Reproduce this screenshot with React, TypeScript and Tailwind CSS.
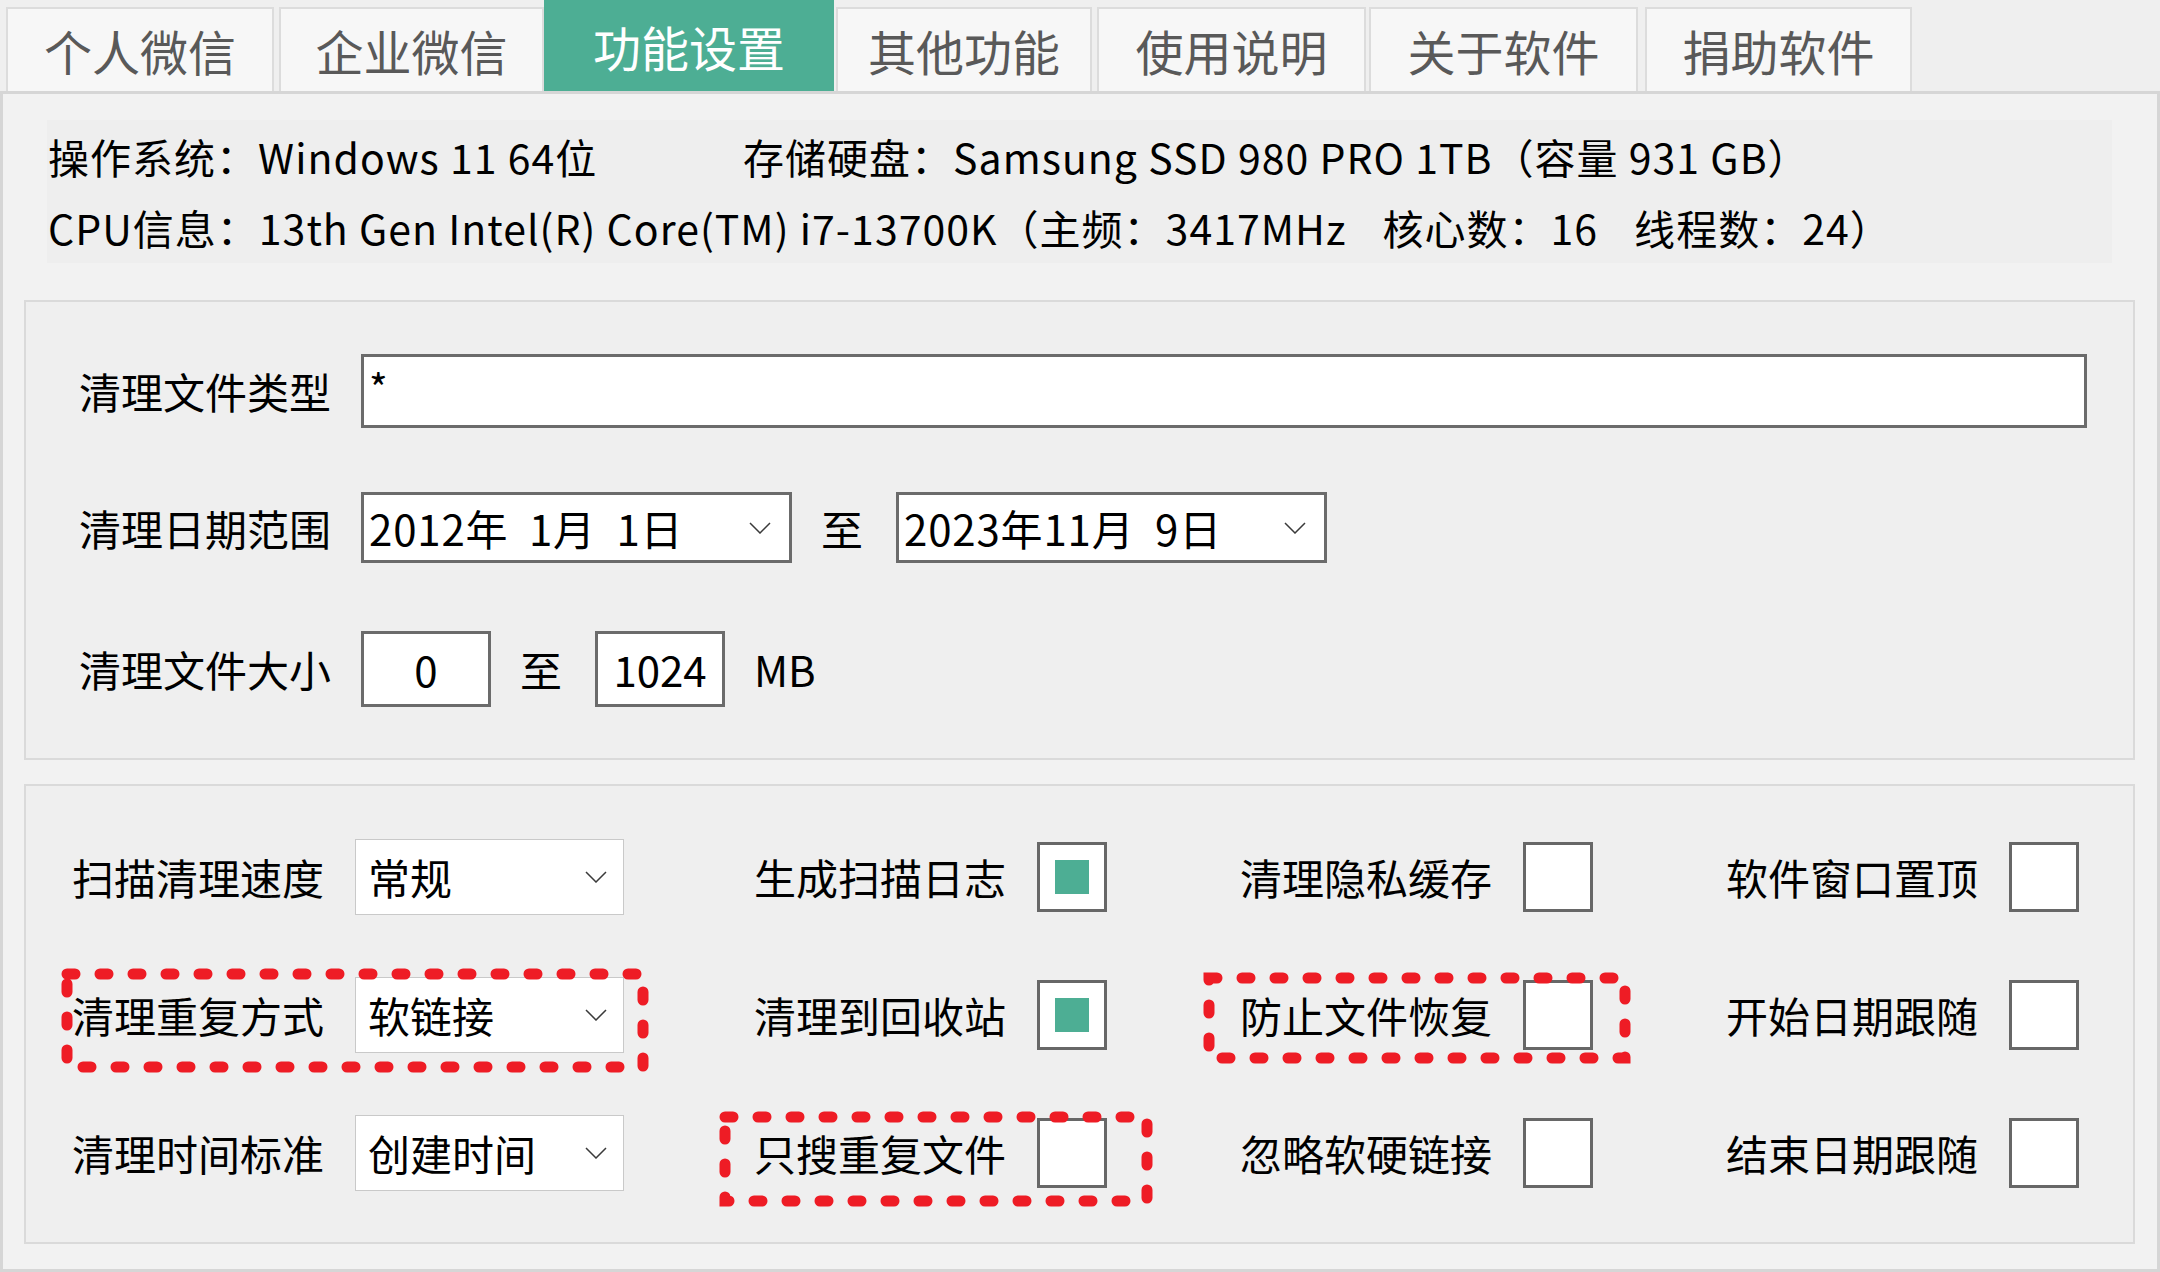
import React from "react";

/* ------------------------------------------------------------------ */
/*  Data                                                              */
/* ------------------------------------------------------------------ */

const TABS = [
  { label: "个人微信", className: "ml-[6px] w-[268px]" },
  { label: "企业微信", className: "ml-[5px] w-[265px]" },
  { label: "功能设置", className: "w-[290px]", active: true },
  { label: "其他功能", className: "ml-[2px] w-[256px]" },
  { label: "使用说明", className: "ml-[5px] w-[269px]" },
  { label: "关于软件", className: "ml-[3px] w-[269px]" },
  { label: "捐助软件", className: "ml-[7px] w-[267px]" },
];

type Cell =
  | { kind: "combo"; label: string; value: string }
  | { kind: "check"; label: string; checked: boolean };

const GRID: Cell[][] = [
  [
    { kind: "combo", label: "扫描清理速度", value: "常规" },
    { kind: "check", label: "生成扫描日志", checked: true },
    { kind: "check", label: "清理隐私缓存", checked: false },
    { kind: "check", label: "软件窗口置顶", checked: false },
  ],
  [
    { kind: "combo", label: "清理重复方式", value: "软链接" },
    { kind: "check", label: "清理到回收站", checked: true },
    { kind: "check", label: "防止文件恢复", checked: false },
    { kind: "check", label: "开始日期跟随", checked: false },
  ],
  [
    { kind: "combo", label: "清理时间标准", value: "创建时间" },
    { kind: "check", label: "只搜重复文件", checked: false },
    { kind: "check", label: "忽略软硬链接", checked: false },
    { kind: "check", label: "结束日期跟随", checked: false },
  ],
];

/* ------------------------------------------------------------------ */
/*  Small controls                                                    */
/* ------------------------------------------------------------------ */

function Chevron() {
  return (
    <svg width="22" height="12" viewBox="0 0 22 12" className="shrink-0">
      <path d="M1 1 L11 11 L21 1" fill="none" stroke="#3a3a3a" strokeWidth="1.5" />
    </svg>
  );
}

function Checkbox({ checked }: { checked: boolean }) {
  return (
    <div className="flex h-[70px] w-[70px] items-center justify-center border-[3px] border-[#676767] bg-white">
      {checked && <div className="h-[34px] w-[34px] bg-[#4dae94]" />}
    </div>
  );
}

function Combo({ value }: { value: string }) {
  return (
    <div className="flex h-[76px] w-[269px] items-center justify-between border border-[#c9c9c9] bg-white pl-[12px] pr-[16px]">
      <span className="text-[42px] leading-none text-black">{value}</span>
      <Chevron />
    </div>
  );
}

function DateBox({ value }: { value: string }) {
  return (
    <div className="flex h-[71px] w-[431px] items-center justify-between border-[3px] border-[#6b6b6b] bg-white pl-[5px] pr-[18px]">
      <span className="whitespace-pre text-[42px] leading-none tracking-[0.02em] text-black">{value}</span>
      <Chevron />
    </div>
  );
}

function SizeBox({ value }: { value: string }) {
  return (
    <div className="flex h-[76px] w-[130px] items-center justify-center border-[3px] border-[#6b6b6b] bg-white text-[42px] leading-none text-black">
      {value}
    </div>
  );
}

/* red dotted annotation drawn over the screenshot */
function Mark({ className }: { className: string }) {
  return (
    <div className={"pointer-events-none absolute " + className}>
      <svg className="h-full w-full overflow-visible">
        <rect
          x="0"
          y="0"
          width="100%"
          height="100%"
          fill="none"
          stroke="#ee1c25"
          strokeWidth="11"
          strokeLinecap="round"
          strokeDasharray="8 25"
        />
      </svg>
    </div>
  );
}

/* ------------------------------------------------------------------ */
/*  Page                                                              */
/* ------------------------------------------------------------------ */

export default function App() {
  return (
    <div className="relative h-[1272px] w-[2160px] overflow-hidden bg-[#efefef] font-['Noto_Sans_CJK_SC','Noto_Sans',sans-serif] text-black">
      {/* Tab strip */}
      <div className="flex h-[91px] items-end">
        {TABS.map((t) =>
          t.active ? (
            <div
              key={t.label}
              className={
                "flex h-[91px] items-center justify-center bg-[#4dae94] text-[48px] leading-none text-white " +
                t.className
              }
            >
              {t.label}
            </div>
          ) : (
            <div
              key={t.label}
              className={
                "flex h-[84px] items-center justify-center border-2 border-b-0 border-[#dcdcdc] bg-[#f7f7f7] text-[48px] leading-none text-[#595959] " +
                t.className
              }
            >
              {t.label}
            </div>
          )
        )}
      </div>

      {/* Tab page */}
      <div className="h-[1181px] border-[3px] border-[#d6d6d6] bg-[#f2f2f2]">
        {/* System info */}
        <div className="ml-[44px] mt-[26px] flex h-[143px] w-[2065px] flex-col bg-[#eeeeee] text-[41px] leading-none tracking-[0.025em]">
          <div className="flex h-[72px] items-center pt-[2px]">
            <span className="w-[696px] pl-[1px]">操作系统：Windows 11 64位</span>
            <span>存储硬盘：Samsung SSD 980 PRO 1TB（容量 931 GB）</span>
          </div>
          <div className="flex h-[72px] items-center pl-[1px]">
            <span>CPU信息：13th Gen Intel(R) Core(TM) i7-13700K（主频：3417MHz</span>
            <span className="ml-[36px]">核心数：16</span>
            <span className="ml-[36px]">线程数：24）</span>
          </div>
        </div>

        {/* Filter group */}
        <div className="ml-[21px] mt-[37px] flex h-[460px] w-[2111px] flex-col border-2 border-[#dadada] bg-[#efefef] pl-[53px] pt-[52px]">
          <div className="flex h-[74px] items-center">
            <span className="w-[282px] text-[42px] leading-none">清理文件类型</span>
            <div className="h-[74px] w-[1726px] border-[3px] border-[#6b6b6b] bg-white pl-[5px] pt-[10px] text-[40px] leading-none">
              *
            </div>
          </div>
          <div className="mt-[64px] flex h-[71px] items-center">
            <span className="w-[282px] text-[42px] leading-none">清理日期范围</span>
            <DateBox value={"2012年  1月  1日"} />
            <span className="ml-[29px] mr-[33px] text-[42px] leading-none">至</span>
            <DateBox value={"2023年11月  9日"} />
          </div>
          <div className="mt-[68px] flex h-[76px] items-center">
            <span className="w-[282px] text-[42px] leading-none">清理文件大小</span>
            <SizeBox value="0" />
            <span className="ml-[29px] mr-[33px] text-[42px] leading-none">至</span>
            <SizeBox value="1024" />
            <span className="ml-[29px] text-[42px] leading-none">MB</span>
          </div>
        </div>

        {/* Options group */}
        <div className="ml-[21px] mt-[24px] flex h-[460px] w-[2111px] flex-col gap-[62px] border-2 border-[#dadada] bg-[#efefef] pl-[46px] pt-[53px]">
          {GRID.map((row, ri) => (
            <div key={ri} className="flex h-[76px] items-center">
              {row.map((c, ci) => (
                <div
                  key={c.label}
                  className={
                    "flex items-center " +
                    (ci === 0 ? "w-[682px]" : ci === 3 ? "" : "w-[486px]")
                  }
                >
                  <span className="w-[283px] text-[42px] leading-none">{c.label}</span>
                  {c.kind === "combo" ? <Combo value={c.value} /> : <Checkbox checked={c.checked} />}
                </div>
              ))}
            </div>
          ))}
        </div>
      </div>

      {/* Annotations */}
      <Mark className="left-[67px] top-[974px] h-[93px] w-[576px]" />
      <Mark className="left-[725px] top-[1117px] h-[84px] w-[422px]" />
      <Mark className="left-[1209px] top-[978px] h-[80px] w-[416px]" />
    </div>
  );
}
